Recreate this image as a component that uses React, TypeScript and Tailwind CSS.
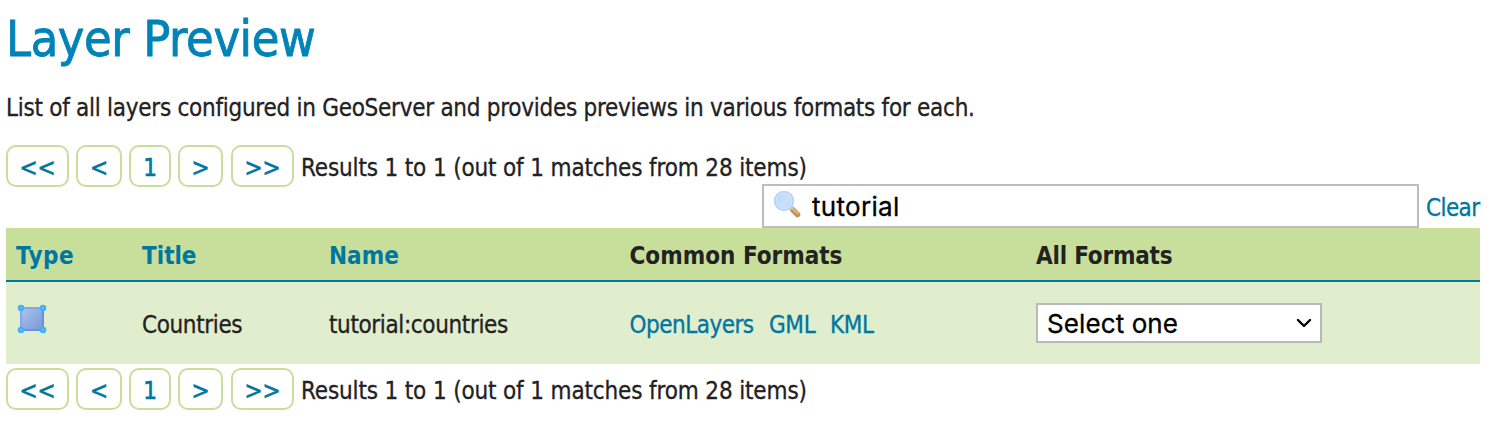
import React from "react";

const link = "text-[#0076a1]";

function Pager() {
  const button =
    "flex h-[42px] items-center justify-center rounded-[10px] border-2 border-[#c7df9b] bg-white pt-[3px] text-[#0076a1] [-webkit-text-stroke:0.6px_currentColor]";
  return (
    <div className="flex h-[42px] items-center">
      <button className={`${button} w-[63px]`}>&lt;&lt;</button>
      <button className={`${button} ml-[7px] w-[46px]`}>&lt;</button>
      <button className={`${button} ml-[7px] w-[42px]`}>1</button>
      <button className={`${button} ml-[7px] w-[45px]`}>&gt;</button>
      <button className={`${button} ml-[8px] w-[63px]`}>&gt;&gt;</button>
      <span className="ml-[7px] whitespace-nowrap pt-[3px] tracking-[-0.15px]">
        Results 1 to 1 (out of 1 matches from 28 items)
      </span>
    </div>
  );
}

function SearchIcon() {
  return (
    <svg className="mb-[2px] ml-[8px] block h-8 w-8 shrink-0" viewBox="0 0 32 32">
      <defs>
        <linearGradient id="lens" x1="0" y1="0" x2="1" y2="1">
          <stop offset="0" stopColor="#b4d4f7" />
          <stop offset="0.55" stopColor="#c9e1fa" />
          <stop offset="1" stopColor="#b5d3f3" />
        </linearGradient>
      </defs>
      <path d="M20.5 20.5L25.5 25.5" stroke="#c4935c" strokeWidth="5.6" strokeLinecap="round" />
      <path d="M21 19.8L25.8 24" stroke="#dfb483" strokeWidth="2.4" strokeLinecap="round" />
      <path d="M17.5 17.5l2.5 2.5" stroke="#c3c6cd" strokeWidth="4.5" />
      <circle cx="12" cy="12" r="9.3" fill="url(#lens)" stroke="#b7d3f3" strokeWidth="1.8" />
      <circle cx="12" cy="12" r="7.8" fill="none" stroke="#cfe4fb" strokeWidth="1.2" />
    </svg>
  );
}

function PolygonIcon() {
  return (
    <svg className="mt-[21px] block h-8 w-8" viewBox="0 0 32 32">
      <defs>
        <linearGradient id="poly" x1="0" y1="0" x2="1" y2="1">
          <stop offset="0" stopColor="#aac5f0" />
          <stop offset="1" stopColor="#7897d8" />
        </linearGradient>
      </defs>
      <rect x="5" y="5" width="22" height="22" fill="url(#poly)" stroke="#86a6e4" strokeWidth="2" />
      <path d="M27 7V27H7" fill="none" stroke="#6d8fdd" strokeWidth="2" />
      <g fill="#58bdf6" stroke="#3db3f4" strokeWidth="2">
        <circle cx="5" cy="5" r="2.3" />
        <circle cx="27" cy="5" r="2.3" />
        <circle cx="5" cy="27" r="2.3" />
        <circle cx="27" cy="27" r="2.3" />
      </g>
    </svg>
  );
}

const columns = "grid grid-cols-[126px_187px_300.5px_406.5px_1fr] pl-[10px]";

export default function App() {
  return (
    <div className="h-[424px] overflow-hidden bg-white pl-[6px] pr-[14px] font-['DejaVu_Sans_Condensed','DejaVu_Sans',sans-serif] text-[24px] leading-[30px] text-[#222] [-webkit-text-stroke:0.3px_currentColor] [font-stretch:condensed]">
      <h1 className="h-[93px] pt-[8px] text-[50px] leading-[62px] tracking-[-0.4px] text-[#0083b8] [-webkit-text-stroke:0.8px_currentColor]">
        Layer Preview
      </h1>
      <p className="h-[52px] whitespace-nowrap tracking-[-0.27px]">
        List of all layers configured in GeoServer and provides previews in various formats for each.
      </p>
      <Pager />
      <div className="-mt-[3px] flex h-[44px] items-center justify-end">
        <div className="flex h-[44px] w-[657px] items-center border-2 border-[#bdbdbd] bg-white">
          <SearchIcon />
          <input
            className="ml-[8px] min-w-0 flex-1 bg-transparent pt-[2px] font-['Inter',sans-serif] text-[26px] leading-[32px] tracking-[0.3px] text-black outline-none"
            defaultValue="tutorial"
          />
        </div>
        <a className={`ml-[7px] w-[54px] whitespace-nowrap pt-[4px] tracking-[-0.6px] ${link}`}>Clear</a>
      </div>
      <div className={`${columns} h-[54px] items-center border-b-2 border-[#0076a1] bg-[#c7df9b] pt-[4px] font-bold [-webkit-text-stroke:0px]`}>
        <span className={`tracking-[0.5px] ${link}`}>Type</span>
        <span className={link}>Title</span>
        <span className={link}>Name</span>
        <span>Common Formats</span>
        <span className="tracking-[-0.2px]">All Formats</span>
      </div>
      <div className={`${columns} h-[82px] bg-[#e1eecd] tracking-[-0.37px]`}>
        <PolygonIcon />
        <span className="pt-[28px]">Countries</span>
        <span className="pt-[28px]">tutorial:countries</span>
        <span className={`flex pt-[28px] ${link}`}>
          <a className="w-[139.5px] tracking-[-0.5px]">OpenLayers</a>
          <a className="w-[61px]">GML</a>
          <a>KML</a>
        </span>
        <button className="mt-[21px] flex h-[40px] w-[286px] items-center justify-between border-2 border-[#b9b9b9] bg-white pl-[9px] pr-[8px] font-['Inter',sans-serif] text-[26px] tracking-[0.1px] text-black">
          <span className="pt-[2px]">Select one</span>
          <svg className="block h-[10px] w-[16px]" viewBox="0 0 16 10" fill="none" stroke="#000" strokeWidth="2.4" strokeLinecap="round" strokeLinejoin="round">
            <path d="M2 2L8 8L14 2" />
          </svg>
        </button>
      </div>
      <div className="mt-[4px]">
        <Pager />
      </div>
    </div>
  );
}
